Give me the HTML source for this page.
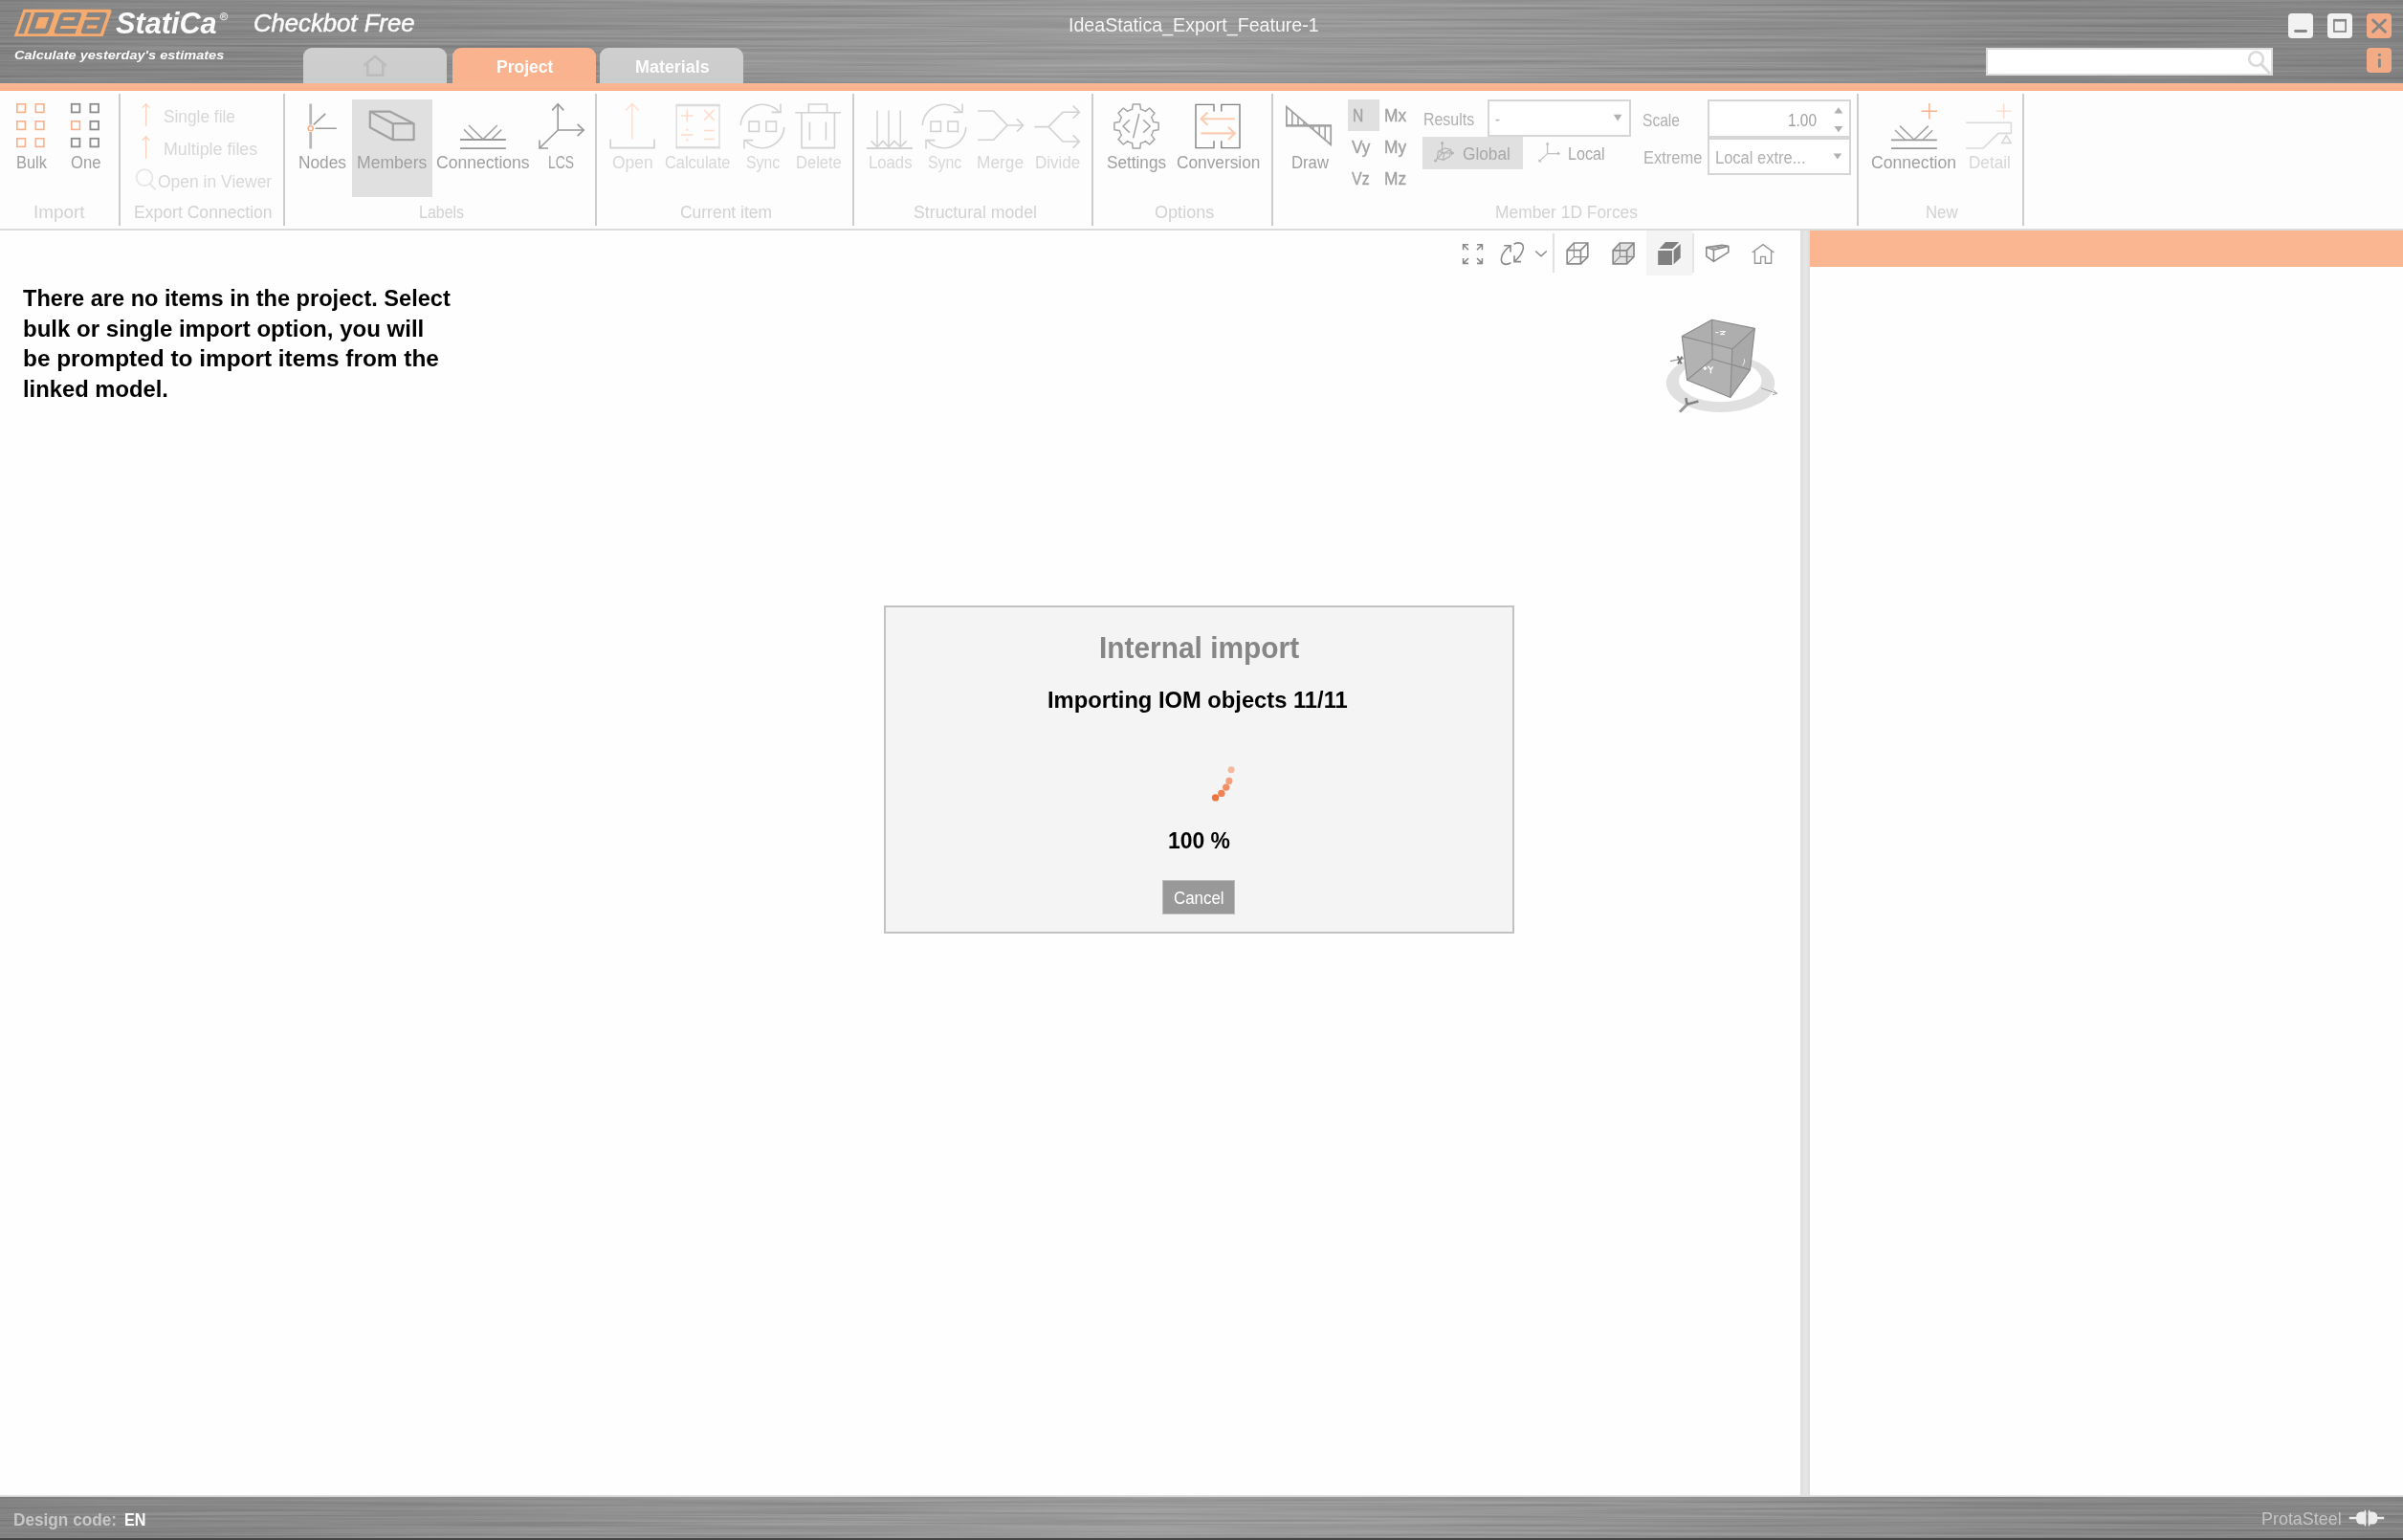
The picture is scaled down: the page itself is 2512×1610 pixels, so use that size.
<!DOCTYPE html>
<html lang="en">
<head>
<meta charset="utf-8">
<title>IDEA StatiCa Checkbot - IdeaStatica_Export_Feature-1</title>
<style>
*{box-sizing:border-box;margin:0;padding:0}
html,body{width:2512px;height:1610px;overflow:hidden;background:#fefefe;font-family:"Liberation Sans",sans-serif}
#app{position:relative;width:2512px;height:1610px;overflow:hidden;background:#fefefe}
.abs{position:absolute}
.t{position:absolute;white-space:pre;line-height:1;transform-origin:0 0;display:block}
.metal{background-color:#8f8f8f;background-image:linear-gradient(90deg,#838383 0,#8a8a8a 14%,#979797 34%,#9c9c9c 48%,#999 60%,#8c8c8c 82%,#838383 100%)}
.brush{position:absolute;left:0;width:2512px;pointer-events:none}
#header{left:0;top:0;width:2512px;height:87px}
#hdrshade{left:0;top:83px;width:2512px;height:4px;background:linear-gradient(180deg,rgba(120,135,140,0),rgba(120,135,140,.55))}
#obar{left:0;top:87px;width:2512px;height:8px;background:linear-gradient(180deg,#f8b795,#fbb08a)}
.tab{position:absolute;top:50px;height:37px;width:150px;border-radius:9px 9px 0 0;background:linear-gradient(180deg,#cfcfcf 0,#cccccc 80%,#c8cece 100%)}
.tab.on{background:#f9b48f}
.wbtn{position:absolute;width:26px;height:26px;border-radius:4px;background:#f2f2f2}
.wbtn.or{background:#f3ab85}
#search{left:2076px;top:50px;width:300px;height:29px;background:#fff;border:2px solid #dcdcdc}
#ribbon{left:0;top:95px;width:2512px;height:144px;background:#fdfdfd}
#rline{left:0;top:239px;width:2512px;height:2px;background:#dcdcdc}
.sep{position:absolute;top:98px;width:2px;height:138px;background:#cdcdcd}
.hl{position:absolute;background:#e0e0e0}
.box{position:absolute;background:#fff;border:2px solid #d6d6d6}
#view{left:0;top:241px;width:1882px;height:1322px;background:#fefefe}
#split{left:1882px;top:241px;width:10px;height:1322px;background:linear-gradient(90deg,#dedede,#e6e6e6 60%,#dcdcdc)}
#side{left:1892px;top:241px;width:620px;height:1322px;background:#fefefe}
#sidehdr{left:1892px;top:241px;width:620px;height:38px;background:#f9b690}
#sline{left:0;top:1563px;width:2512px;height:2px;background:linear-gradient(180deg,#e6e6e6,#d0d0d0)}
#status{left:0;top:1565px;width:2512px;height:43px}
#sdark{left:0;top:1608px;width:2512px;height:2px;background:#454545}
#dlg{left:924px;top:633px;width:659px;height:343px;background:#f4f4f4;border:2px solid #c2c2c2}
#cancel{left:1215px;top:920px;width:76px;height:36px;background:#999;border:1px solid #bdbdbd}
svg{position:absolute;left:0;top:0;overflow:visible}
</style>
</head>
<body>
<div id="app">
  <!-- ===== title / header ===== -->
  <div id="header" class="abs metal"></div>
  <svg class="brush" style="top:0" width="2512" height="87"><defs><filter id="brushf" x="0" y="0" width="100%" height="100%" color-interpolation-filters="sRGB"><feTurbulence type="fractalNoise" baseFrequency="0.003 0.38" numOctaves="2" seed="7" result="n"/><feColorMatrix in="n" type="matrix" values="0 0 0 0 1  0 0 0 0 1  0 0 0 0 1  0.30 0 0 0 -0.118"/></filter><filter id="brushd" x="0" y="0" width="100%" height="100%" color-interpolation-filters="sRGB"><feTurbulence type="fractalNoise" baseFrequency="0.003 0.38" numOctaves="2" seed="21" result="n"/><feColorMatrix in="n" type="matrix" values="0 0 0 0 0  0 0 0 0 0  0 0 0 0 0  0.30 0 0 0 -0.118"/></filter></defs><rect width="2512" height="87" filter="url(#brushf)"/><rect width="2512" height="87" filter="url(#brushd)"/></svg>
  <div id="hdrshade" class="abs"></div>
  <div class="tab" style="left:317px"></div>
  <div class="tab on" style="left:473px"></div>
  <div class="tab" style="left:627px"></div>
  <div id="obar" class="abs"></div>
  <div class="wbtn" style="left:2392px;top:14px"></div>
  <div class="wbtn" style="left:2433px;top:14px"></div>
  <div class="wbtn or" style="left:2474px;top:14px"></div>
  <div class="wbtn or" style="left:2474px;top:50px"></div>
  <div id="search" class="abs"></div>

  <!-- ===== ribbon ===== -->
  <div id="ribbon" class="abs"></div>
  <div id="rline" class="abs"></div>
  <div class="sep" style="left:124px"></div>
  <div class="sep" style="left:296px"></div>
  <div class="sep" style="left:622px"></div>
  <div class="sep" style="left:891px"></div>
  <div class="sep" style="left:1141px"></div>
  <div class="sep" style="left:1329px"></div>
  <div class="sep" style="left:1941px"></div>
  <div class="sep" style="left:2114px"></div>
  <div class="hl" style="left:368px;top:104px;width:84px;height:102px"></div>
  <div class="hl" style="left:1409px;top:104px;width:33px;height:33px"></div>
  <div class="hl" style="left:1487px;top:143px;width:105px;height:34px"></div>
  <div class="box" style="left:1555px;top:104px;width:150px;height:39px"></div>
  <div class="box" style="left:1785px;top:104px;width:150px;height:41px;border-bottom-width:3px"></div>
  <div class="box" style="left:1785px;top:143px;width:150px;height:40px;border-top-width:3px"></div>

  <!-- ===== main areas ===== -->
  <div id="view" class="abs"></div>
  <div id="split" class="abs"></div>
  <div id="side" class="abs"></div>
  <div id="sidehdr" class="abs"></div>
  <div class="abs" style="left:1721px;top:241px;width:48px;height:47px;background:#f4f4f4"></div>
  <div class="abs" style="left:1623px;top:244px;width:2px;height:41px;background:#e2e2e2"></div>
  <div class="abs" style="left:1769px;top:244px;width:2px;height:41px;background:#e6e6e6"></div>

  <!-- ===== status bar ===== -->
  <div id="sline" class="abs"></div>
  <div id="status" class="abs metal"></div>
  <svg class="brush" style="top:1565px" width="2512" height="43"><rect width="2512" height="43" filter="url(#brushf)"/><rect width="2512" height="43" filter="url(#brushd)"/></svg>
  <div id="sdark" class="abs"></div>

  <!-- ===== dialog ===== -->
  <div id="dlg" class="abs"></div>
  <div id="cancel" class="abs"></div>

  <!-- ===== icons ===== -->
  <svg width="2512" height="1610" viewBox="0 0 2512 1610" fill="none" stroke-linecap="butt" stroke-linejoin="miter">
<!-- IDEA logo -->
<g transform="translate(0,38) skewX(-19.16) translate(0,-38)">
  <path d="M14.7 9.8 H104.3 Q107.6 9.8 107.6 13 V38 H14.7 Z" fill="#f5ab6e" stroke="none"/>
  <rect x="18" y="13" width="6" height="22.2" fill="#858585"/>
  <path d="M27.7 13 H45.5 Q49 13 49 16.5 V31.7 Q49 35.2 45.5 35.2 H27.7 Z" fill="#858585"/>
  <rect x="33.6" y="18.1" width="10.7" height="11.6" fill="#f5ab6e"/>
  <path d="M58.4 13 H73.9 Q77.4 13 77.4 16.5 V35.2 H58.4 Q54.9 35.2 54.9 31.7 V16.5 Q54.9 13 58.4 13 Z" fill="#858585"/>
  <rect x="59.8" y="18.1" width="11.7" height="3.1" fill="#f5ab6e"/>
  <rect x="59.9" y="27" width="17.7" height="3" fill="#f5ab6e"/>
  <path d="M82.9 13 H100.4 Q103.9 13 103.9 16.5 V35.2 H86.4 Q82.9 35.2 82.9 31.7 Z" fill="#858585"/>
  <rect x="81.4" y="18.1" width="16.5" height="2.6" fill="#f5ab6e"/>
  <rect x="87.5" y="26.5" width="10.5" height="3.2" fill="#f5ab6e"/>
</g>
<!-- registered mark -->
<circle cx="234" cy="17.2" r="3.7" stroke="#f4f4f4" stroke-width="0.9"/>
<path d="M232.7 19.3 V15.1 H234.4 Q235.5 15.1 235.5 16.2 Q235.5 17.2 234.4 17.2 H232.7 M234.3 17.2 L235.6 19.3" stroke="#f4f4f4" stroke-width="0.8"/>
<!-- home tab icon -->
<path d="M380.4 68.6 L392.1 59 L403.8 68.6" stroke="#bcbcbc" stroke-width="2.6"/>
<path d="M384.3 66.5 V78.6 H400.3 V66.5" stroke="#bcbcbc" stroke-width="2.6"/>
<!-- window buttons -->
<rect x="2398.1" y="31.1" width="13.8" height="2.8" rx="1.4" fill="#868686"/>
<rect x="2439.9" y="21.3" width="12.2" height="11.7" stroke="#868686" stroke-width="1.7"/>
<rect x="2439.1" y="19.9" width="13.9" height="2.6" fill="#868686"/>
<path d="M2480.6 21 L2493.4 33.2 M2493.4 21 L2480.6 33.2" stroke="#858585" stroke-width="2.9" stroke-linecap="round"/>
<circle cx="2487.4" cy="57.3" r="1.6" fill="#858585"/>
<path d="M2487.4 62.6 V69.4" stroke="#858585" stroke-width="2.9" stroke-linecap="round"/>
<!-- search magnifier -->
<circle cx="2358.5" cy="61.5" r="7.3" stroke="#dadada" stroke-width="2.6"/>
<path d="M2363.7 67 L2373 77" stroke="#dadada" stroke-width="3"/>
<!-- ===== ribbon: Import ===== -->
<g stroke="#f8b18b" stroke-width="1.6">
  <rect x="17.8" y="108.8" width="8.6" height="8.6"/><rect x="37.3" y="108.8" width="8.6" height="8.6"/>
  <rect x="17.8" y="126.8" width="8.6" height="8.6"/><rect x="37.3" y="126.8" width="8.6" height="8.6"/>
  <rect x="17.8" y="144.8" width="8.6" height="8.6"/><rect x="37.3" y="144.8" width="8.6" height="8.6"/>
  <rect x="74.8" y="126.8" width="8.6" height="8.6"/>
</g>
<g stroke="#8c8c8c" stroke-width="1.8">
  <rect x="74.8" y="108.8" width="8.6" height="8.6"/><rect x="94.4" y="108.8" width="8.6" height="8.6"/>
  <rect x="94.4" y="126.8" width="8.6" height="8.6"/>
  <rect x="74.8" y="144.8" width="8.6" height="8.6"/><rect x="94.4" y="144.8" width="8.6" height="8.6"/>
</g>
<!-- Export connection -->
<g stroke="#fcd3bf" stroke-width="1.3">
  <path d="M152.6 132 V108.6 M149 112.6 L152.6 108.6 L156.2 112.6"/>
  <path d="M152.6 166 V142.8 M149 146.8 L152.6 142.8 L156.2 146.8"/>
</g>
<circle cx="151" cy="185.6" r="8.4" stroke="#e6e6e6" stroke-width="1.8"/>
<path d="M156.6 192 L162.6 198.4" stroke="#e6e6e6" stroke-width="2"/>
<!-- Nodes -->
<path d="M324.7 108.4 V130.4 M324.7 138 V155.6" stroke="#b9b9b9" stroke-width="2.8"/>
<path d="M329.6 134.2 H351.8 M327.8 130.4 L340.2 118.8" stroke="#9a9a9a" stroke-width="1.6"/>
<circle cx="324.7" cy="134.2" r="2.5" stroke="#f8b18b" stroke-width="1.6"/>
<!-- Members -->
<path d="M386.8 116.6 H407.4 L432.6 129.2 V146.2 H410.8 L386.8 133.2 Z M386.8 116.6 L410.8 129.2 H432.6 M410.8 129.2 V146.2" stroke="#a1a1a1" stroke-width="2.2" stroke-linejoin="round"/>
<!-- Connections -->
<path d="M481 146 H528.8 M481 155.2 H528.8" stroke="#999" stroke-width="1.8"/>
<path d="M490 131 L505 145.6 M485 135.4 L495.4 145.6 M519.8 131 L505 145.6 M524.2 135.6 L514 145.6" stroke="#a3a3a3" stroke-width="1.5"/>
<!-- LCS -->
<path d="M583.2 109 V136 H610 M583.2 136 L564.2 154.8" stroke="#999" stroke-width="1.6"/>
<path d="M577.2 115.4 L583.2 108.8 L589.2 115.4 M603.6 129.8 L610.2 136 L603.6 142.2 M564 146.4 V155 H573" stroke="#999" stroke-width="1.6"/>
<!-- ===== Current item ===== -->
<path d="M638.2 145.6 V154.6 H684 V145.6" stroke="#d2d2d2" stroke-width="1.7"/>
<path d="M660.8 145.6 V108.4 M654 115.6 L660.8 108.4 L667.6 115.6" stroke="#fde1d4" stroke-width="1.5"/>
<path d="M706.6 110 H752.6 M706.6 154.2 H752.6" stroke="#dcdcdc" stroke-width="2.6"/>
<path d="M707.2 109 V155.2 M752 109 V155.2" stroke="#dcdcdc" stroke-width="1.4"/>
<g stroke="#fddccc" stroke-width="1.5">
  <path d="M712 121 H724.6 M718.3 114.6 V127.4 M736 114.8 L746.6 125.6 M746.6 114.8 L736 125.6"/>
  <path d="M712 141 H724.6 M735.8 136.6 H746.8 M735.8 145.6 H746.8"/>
</g>
<circle cx="718.3" cy="135.8" r="1.2" fill="#fddccc"/><circle cx="718.3" cy="146.4" r="1.2" fill="#fddccc"/>
<!-- Sync 1 -->
<g id="sync1" stroke="#d2d2d2" stroke-width="1.6">
  <path d="M774.2 131 A23 23 0 0 1 814.4 117"/>
  <path d="M819.8 133 A23 23 0 0 1 779.6 147"/>
  <path d="M816 108.6 V117.4 H806.6 M778 155.4 V146.6 H787.4"/>
  <rect x="783" y="127" width="10.4" height="10.4"/><rect x="801" y="127" width="10.4" height="10.4"/>
</g>
<!-- Delete -->
<g stroke="#d2d2d2" stroke-width="1.6">
  <path d="M831.2 117.8 H879 M838 117.8 V154.6 H872.4 V117.8 M845.4 117.8 V109 H864.6 V117.8"/>
  <path d="M846.4 127.4 V146.6 M863.4 127.4 V146.6"/>
</g>
<!-- ===== Structural model ===== -->
<g stroke="#d2d2d2" stroke-width="1.5">
  <path d="M906 155 H954" stroke-width="1.8"/>
  <path d="M917 115.6 V154 M929 115.6 V154 M941.2 115.6 V154"/>
  <path d="M910.6 147.4 L917 153.6 L923 147.4 L929 153.6 L935 147.4 L941.2 153.6 L947.6 147.4"/>
</g>
<use href="#sync1" x="190" y="0"/>
<g stroke="#d2d2d2" stroke-width="1.6">
  <path d="M1022.2 116 H1038.6 L1053 131 L1038.6 146.2 H1022.2 M1053 131 H1069.6 M1063 124.4 L1069.6 131 L1063 137.6"/>
  <path d="M1081.4 132.6 H1096 M1128.4 117.2 H1111 L1096 132.6 L1111 148 H1128.4 M1121.8 110.6 L1128.4 117.2 L1121.8 123.8 M1121.8 141.4 L1128.4 148 L1121.8 154.6"/>
</g>
<!-- ===== Options ===== -->
<path d="M1183.6 114.3 L1184.2 108.9 L1191.8 108.9 L1192.4 114.3 A18.2 18.2 0 0 1 1197.4 116.4 L1201.6 113.0 L1207.0 118.4 L1203.6 122.6 A18.2 18.2 0 0 1 1205.7 127.6 L1211.1 128.2 L1211.1 135.8 L1205.7 136.4 A18.2 18.2 0 0 1 1203.6 141.4 L1207.0 145.6 L1201.6 151.0 L1197.4 147.6 A18.2 18.2 0 0 1 1192.4 149.7 L1191.8 155.1 L1184.2 155.1 L1183.6 149.7 A18.2 18.2 0 0 1 1178.6 147.6 L1174.4 151.0 L1169.0 145.6 L1172.4 141.4 A18.2 18.2 0 0 1 1170.3 136.4 L1164.9 135.8 L1164.9 128.2 L1170.3 127.6 A18.2 18.2 0 0 1 1172.4 122.6 L1169.0 118.4 L1174.4 113.0 L1178.6 116.4 A18.2 18.2 0 0 1 1183.6 114.3 Z" stroke="#a4a4a4" stroke-width="1.5" stroke-linejoin="round"/>
<path d="M1180.8 125.2 L1174 132 L1180.8 138.6 M1195.2 125.2 L1202.2 132 L1195.2 138.6 M1190.8 119 L1184.6 144.4" stroke="#a4a4a4" stroke-width="1.5"/>
<path d="M1269 116.6 V109.4 H1250 V154.6 H1269 V147.2 M1276.8 116.6 V109.4 H1296 V154.6 H1276.8 V147.2" stroke="#808080" stroke-width="1.4"/>
<path d="M1290.8 124.2 H1256 M1262.4 117.6 L1255.6 124.2 L1262.4 130.8 M1255.4 139.4 H1290.4 M1284 132.8 L1290.8 139.4 L1284 146" stroke="#fbcbb2" stroke-width="2.1"/>
<!-- ===== Member 1D Forces ===== -->
<g stroke="#a0a0a0" stroke-width="1.8">
  <path d="M1344.9 111.6 V131.4 H1391.2 V151.2 Z" stroke-linejoin="miter"/>
  <path d="M1344.2 131.4 H1392" stroke-width="2.2"/>
  <path d="M1350.8 117 V131.4 M1357 122.4 V131.4 M1363 127.6 V131.4 M1372.8 131.4 V135.4 M1379.2 131.4 V141 M1385.2 131.4 V146.2" stroke-width="1.6"/>
</g>
<path d="M1686.8 119.8 H1695.4 L1691.1 126.6 Z" fill="#b0b0b0"/>
<path d="M1916.6 160.4 H1925.2 L1920.9 166.4 Z" fill="#b0b0b0"/>
<path d="M1917.4 118.4 H1926.4 L1921.9 112.2 Z" fill="#b0b0b0"/>
<path d="M1917.4 132 H1926.4 L1921.9 138.2 Z" fill="#b0b0b0"/>
<!-- global icon -->
<g stroke="#b4b4b4" stroke-width="1.2">
  <path d="M1507.6 149.2 V160 M1507.6 160 L1500 168.6 M1507.6 160 H1519.6"/>
  <path d="M1503.4 158.2 L1510.4 154.8 L1516.6 156.4 L1515.6 163.6 L1508.6 167.4 L1502.4 165.4 Z M1503.4 158.2 L1509.6 160.2 L1508.6 167.4 M1509.6 160.2 L1516.6 156.4"/>
</g>
<circle cx="1507.6" cy="149.6" r="1.5" fill="#b4b4b4"/><circle cx="1500.6" cy="168" r="1.5" fill="#b4b4b4"/><path d="M1517 157.6 L1520.6 160 L1517 162.4 Z" fill="#b4b4b4"/>
<!-- local icon -->
<g stroke="#c2c2c2" stroke-width="1.3">
  <path d="M1617.6 149.6 V160.6 H1629.6 M1617.6 160.6 L1609.4 168.4"/>
</g>
<path d="M1615.6 151.6 L1617.6 148.2 L1619.6 151.6 Z M1628 158.6 L1631.4 160.6 L1628 162.6 Z M1608.4 166 L1608.4 169.6 L1612 169.4 Z" fill="#c2c2c2"/>
<!-- ===== New ===== -->
<path d="M1977 146.4 H2024.8 M1977 155.2 H2024.8" stroke="#999" stroke-width="1.8"/>
<path d="M1986 131.6 L2001 146 M1981 136 L1991.4 146 M2015.8 131.6 L2001 146 M2020.2 136.2 L2010 146" stroke="#a3a3a3" stroke-width="1.5"/>
<path d="M2008.6 116.2 H2025 M2016.8 108 V124.4" stroke="#f8b18b" stroke-width="1.4"/>
<path d="M2055.2 128.2 H2102.4 V139.4 H2089 L2073 155 H2055.2" stroke="#dadada" stroke-width="1.6"/>
<path d="M2097.4 141.6 L2102 149.4 H2092.8 Z" stroke="#d6d6d6" stroke-width="1.5"/>
<path d="M2087 116.2 H2102.6 M2094.8 108.4 V124" stroke="#fcd9c8" stroke-width="1.3"/>
<!-- ===== viewport toolbar ===== -->
<g stroke="#8a8a8a" stroke-width="1.6">
  <path d="M1535 255.8 H1529.6 V261.2 M1529.6 255.8 L1535 261.2 M1544 255.8 H1549.4 V261.2 M1549.4 255.8 L1544 261.2 M1535 275.4 H1529.6 V270 M1529.6 275.4 L1535 270 M1544 275.4 H1549.4 V270 M1549.4 275.4 L1544 270"/>
  <path d="M1579.4 274.8 C1572.4 278.6 1568.4 274.6 1569.6 269.4 C1570.6 264.6 1574.4 260.2 1578.8 257.2 M1572.2 256.8 H1579 V263.4"/>
  <path d="M1582.6 255.2 C1588.6 252.2 1593.4 254.6 1592.2 260.4 C1591.2 265.2 1587.4 269.8 1583 273.4 M1583 267.2 V273.6 H1590"/>
  <path d="M1605.2 262.4 L1611 267.8 L1616.8 262.4" stroke-width="1.4"/>
</g>
<g stroke="#8a8a8a" stroke-width="1.7">
  <path d="M1638.2 261.6 H1652.4 V275.8 H1638.2 Z M1638.2 261.6 L1645.4 254 H1659.8 V268.6 L1652.4 275.8 M1652.4 261.6 L1659.8 254"/>
  <path d="M1645.4 254 V268.6 H1659.8 M1645.4 268.6 L1638.2 275.8 M1645.4 263.6 V268.6 H1650" stroke-width="1.1"/>
</g>
<path d="M1686.2 261.8 L1693.4 254 H1708 V268.4 L1700.6 275.8 H1686.2 Z" fill="#e2e2e2"/>
<g stroke="#8a8a8a" stroke-width="1.7">
  <path d="M1686.2 261.8 H1700.6 V275.8 H1686.2 Z M1686.2 261.8 L1693.4 254 H1708 V268.4 L1700.6 275.8 M1700.6 261.8 L1708 254"/>
  <path d="M1693.4 254 V268.4 H1708 M1693.4 268.4 L1686.2 275.8" stroke-width="1.1"/>
</g>
<path d="M1733.2 262 H1748 V277 H1733.2 Z M1734.6 260 L1741 253.1 H1755.1 L1748.4 260 Z M1749.6 261.6 L1756.7 254.9 V269.5 L1749.6 276.2 Z" fill="#808080"/>
<g stroke="#8a8a8a" stroke-width="1.6" stroke-linejoin="round">
  <path d="M1783.8 258.6 L1800.2 256.4 L1806.8 257.4 V263.6 L1791.4 273.4 L1783.8 267.8 Z M1783.8 258.6 L1791.4 261.2 L1806.8 257.4 M1791.4 261.2 V273.4"/>
  <path d="M1789.6 259.6 L1800.4 257.8" stroke-width="1"/>
</g>
<path d="M1831.6 264 L1843 255.6 L1854.4 264 M1834.4 262.6 V275.2 H1840.6 V268.4 H1845.4 V275.2 H1851.6 V262.6" stroke="#979797" stroke-width="1.4"/>
<!-- ===== navigation cube ===== -->
<path d="M1741.8 400.6 A56.7 30.4 0 1 0 1855.2 400.6 A56.7 30.4 0 1 0 1741.8 400.6 Z M1755 398 A43.3 22.2 0 1 1 1841.6 398 A43.3 22.2 0 1 1 1755 398 Z" fill="#e0e0e0" fill-rule="evenodd"/>
<path d="M1789.6 334.2 L1834.4 343.4 L1829.5 386.6 L1808.9 415.5 L1763.6 397.2 L1758.3 351.6 Z" fill="#aeaeae"/>
<path d="M1758.3 351.6 L1810.8 364.8 L1808.9 415.5 L1763.6 397.2 Z" fill="#b2b2b2"/>
<path d="M1810.8 364.8 L1834.4 343.4 L1829.5 386.6 L1808.9 415.5 Z" fill="#a9a9a9"/>
<g stroke="#8a8a8a" stroke-width="1.1" stroke-linejoin="round">
  <path d="M1789.6 334.2 L1834.4 343.4 L1829.5 386.6 L1808.9 415.5 L1763.6 397.2 L1758.3 351.6 Z"/>
  <path d="M1758.3 351.6 L1810.8 364.8 L1834.4 343.4 M1810.8 364.8 L1808.9 415.5"/>
  <path d="M1789.6 334.2 L1790.1 375.5 L1763.6 397.2 M1790.1 375.5 L1829.5 386.6"/>
</g>
<path d="M1793.4 347.6 H1796.4 M1797.8 346.6 H1803.6 L1798.4 349.6 H1803" stroke="#fff" stroke-width="1"/>
<path d="M1780.4 385 H1784.4 M1782.4 383 V387 M1785.6 382.6 L1788.4 386.4 L1790.6 383.4 M1788.4 386.4 V390.4" stroke="#fff" stroke-width="1.3"/>
<path d="M1823.4 375.4 Q1825 378.6 1821.4 382.4" stroke="#f2f2f2" stroke-width="1"/>
<path d="M1746 377.6 L1760.4 374.6" stroke="#9a9a9a" stroke-width="1.2"/>
<path d="M1753.6 372.4 L1757.6 380.4 M1758.4 372.8 L1754 380.4" stroke="#777" stroke-width="2"/>
<path d="M1756 430.6 L1763.6 422.8 L1762.4 416 M1763.6 422.8 L1775.4 419.6" stroke="#828282" stroke-width="2.6"/>
<path d="M1756.4 430.4 L1763.4 423" stroke="#9c9c9c" stroke-width="2.8"/>
<path d="M1841.2 405.8 L1857.6 411.4 M1853.4 407.4 L1857.8 411.4 L1853 412.6" stroke="#9a9a9a" stroke-width="0.9"/>
<!-- ===== spinner ===== -->
<circle cx="1287.1" cy="804.7" r="3.5" fill="#f4b7a0"/>
<circle cx="1284.9" cy="816.4" r="3.6" fill="#f3a07d"/>
<circle cx="1281.7" cy="823.2" r="3.6" fill="#f28e64"/>
<circle cx="1276.9" cy="829.4" r="3.7" fill="#f18251"/>
<circle cx="1270.6" cy="833.9" r="3.7" fill="#f0733c"/>
<!-- ===== status plug ===== -->
<path d="M2455.8 1587 H2466 M2482 1587 H2492.2" stroke="#ececec" stroke-width="2.4"/>
<path d="M2473.4 1580.4 H2468.4 Q2463 1580.4 2463 1587 Q2463 1593.6 2468.4 1593.6 H2473.4 Z M2475.6 1580.4 H2480 Q2485.4 1580.4 2485.4 1587 Q2485.4 1593.6 2480 1593.6 H2475.6 Z" fill="#ececec"/>
<path d="M2472.4 1578.8 V1595.4 M2476.6 1578.8 V1595.4" stroke="#ececec" stroke-width="1.4"/>

  </svg>

  <!-- ===== texts ===== -->
<div id="texts" style="position:absolute;left:0;top:0;width:2512px;height:1610px;will-change:transform">
<span class="t" style="left:120.70px;top:7px;line-height:35px;font-size:31.00px;color:#fbfbfb;transform:scaleX(0.9888);font-weight:700;font-style:italic;">StatiCa</span>
<span class="t" style="left:265.40px;top:10px;line-height:28px;font-size:25.00px;color:#fbfbfb;transform:scaleX(1.0274);font-style:italic;-webkit-text-stroke:0.5px #fbfbfb;">Checkbot Free</span>
<span class="t" style="left:14.60px;top:50px;line-height:15px;font-size:13.40px;color:#fbfbfb;transform:scaleX(1.0858);font-weight:700;font-style:italic;">Calculate yesterday&#x27;s estimates</span>
<span class="t" style="left:1117.30px;top:14px;line-height:23px;font-size:20.50px;color:#f6f6f6;transform:scaleX(0.9568);">IdeaStatica_Export_Feature-1</span>
<span class="t" style="left:518.70px;top:59px;line-height:21px;font-size:19.20px;color:#fdfdfd;transform:scaleX(0.9126);font-weight:700;">Project</span>
<span class="t" style="left:663.70px;top:59px;line-height:21px;font-size:19.20px;color:#fdfdfd;transform:scaleX(0.9347);font-weight:700;">Materials</span>
<span class="t" style="left:17.00px;top:160px;line-height:20px;font-size:18.00px;color:#a0a0a0;transform:scaleX(0.9129);">Bulk</span>
<span class="t" style="left:74.00px;top:160px;line-height:20px;font-size:18.00px;color:#a0a0a0;transform:scaleX(0.9259);">One</span>
<span class="t" style="left:170.80px;top:112px;line-height:20px;font-size:18.00px;color:#d7d7d7;transform:scaleX(0.9599);">Single file</span>
<span class="t" style="left:170.80px;top:146px;line-height:20px;font-size:18.00px;color:#d7d7d7;transform:scaleX(0.9915);">Multiple files</span>
<span class="t" style="left:164.80px;top:180px;line-height:20px;font-size:18.00px;color:#d7d7d7;transform:scaleX(0.9710);">Open in Viewer</span>
<span class="t" style="left:312.00px;top:160px;line-height:20px;font-size:18.00px;color:#a0a0a0;transform:scaleX(0.9612);">Nodes</span>
<span class="t" style="left:373.00px;top:160px;line-height:20px;font-size:18.00px;color:#a0a0a0;transform:scaleX(0.9771);">Members</span>
<span class="t" style="left:456.00px;top:160px;line-height:20px;font-size:18.00px;color:#a0a0a0;transform:scaleX(0.9752);">Connections</span>
<span class="t" style="left:573.00px;top:160px;line-height:20px;font-size:18.00px;color:#a0a0a0;transform:scaleX(0.7712);">LCS</span>
<span class="t" style="left:639.80px;top:160px;line-height:20px;font-size:18.00px;color:#d7d7d7;transform:scaleX(0.9670);">Open</span>
<span class="t" style="left:695.00px;top:160px;line-height:20px;font-size:18.00px;color:#d7d7d7;transform:scaleX(0.9113);">Calculate</span>
<span class="t" style="left:780.00px;top:160px;line-height:20px;font-size:18.00px;color:#d7d7d7;transform:scaleX(0.8749);">Sync</span>
<span class="t" style="left:831.50px;top:160px;line-height:20px;font-size:18.00px;color:#d7d7d7;transform:scaleX(0.9189);">Delete</span>
<span class="t" style="left:907.70px;top:160px;line-height:20px;font-size:18.00px;color:#d7d7d7;transform:scaleX(0.9276);">Loads</span>
<span class="t" style="left:969.80px;top:160px;line-height:20px;font-size:18.00px;color:#d7d7d7;transform:scaleX(0.8799);">Sync</span>
<span class="t" style="left:1021.00px;top:160px;line-height:20px;font-size:18.00px;color:#d7d7d7;transform:scaleX(0.9602);">Merge</span>
<span class="t" style="left:1081.70px;top:160px;line-height:20px;font-size:18.00px;color:#d7d7d7;transform:scaleX(0.9452);">Divide</span>
<span class="t" style="left:1157.00px;top:160px;line-height:20px;font-size:18.00px;color:#a0a0a0;transform:scaleX(0.9535);">Settings</span>
<span class="t" style="left:1230.00px;top:160px;line-height:20px;font-size:18.00px;color:#a0a0a0;transform:scaleX(0.9601);">Conversion</span>
<span class="t" style="left:1349.50px;top:160px;line-height:20px;font-size:18.00px;color:#a0a0a0;transform:scaleX(0.9269);">Draw</span>
<span class="t" style="left:1956.40px;top:160px;line-height:20px;font-size:18.00px;color:#a0a0a0;transform:scaleX(0.9772);">Connection</span>
<span class="t" style="left:2057.90px;top:160px;line-height:20px;font-size:18.00px;color:#d7d7d7;transform:scaleX(0.9514);">Detail</span>
<span class="t" style="left:35.00px;top:212px;line-height:20px;font-size:18.00px;color:#d2d2d2;transform:scaleX(1.0504);">Import</span>
<span class="t" style="left:140.00px;top:212px;line-height:20px;font-size:18.00px;color:#d2d2d2;transform:scaleX(0.9764);">Export Connection</span>
<span class="t" style="left:437.90px;top:212px;line-height:20px;font-size:18.00px;color:#d2d2d2;transform:scaleX(0.8878);">Labels</span>
<span class="t" style="left:711.00px;top:212px;line-height:20px;font-size:18.00px;color:#d2d2d2;transform:scaleX(0.9693);">Current item</span>
<span class="t" style="left:954.70px;top:212px;line-height:20px;font-size:18.00px;color:#d2d2d2;transform:scaleX(0.9844);">Structural model</span>
<span class="t" style="left:1207.00px;top:212px;line-height:20px;font-size:18.00px;color:#d2d2d2;transform:scaleX(1.0039);">Options</span>
<span class="t" style="left:1563.00px;top:212px;line-height:20px;font-size:18.00px;color:#d2d2d2;transform:scaleX(0.9673);">Member 1D Forces</span>
<span class="t" style="left:2013.00px;top:212px;line-height:20px;font-size:18.00px;color:#d2d2d2;transform:scaleX(0.9322);">New</span>
<span class="t" style="left:1414.00px;top:111px;line-height:20px;font-size:18.00px;color:#a2a2a2;transform:scaleX(0.8689);-webkit-text-stroke:0.4px #a2a2a2;">N</span>
<span class="t" style="left:1446.90px;top:111px;line-height:20px;font-size:18.00px;color:#a2a2a2;transform:scaleX(0.9631);-webkit-text-stroke:0.4px #a2a2a2;">Mx</span>
<span class="t" style="left:1413.30px;top:144px;line-height:20px;font-size:18.00px;color:#a2a2a2;transform:scaleX(0.9489);-webkit-text-stroke:0.4px #a2a2a2;">Vy</span>
<span class="t" style="left:1446.90px;top:144px;line-height:20px;font-size:18.00px;color:#a2a2a2;transform:scaleX(0.9631);-webkit-text-stroke:0.4px #a2a2a2;">My</span>
<span class="t" style="left:1413.30px;top:177px;line-height:20px;font-size:18.00px;color:#a2a2a2;transform:scaleX(0.8898);-webkit-text-stroke:0.4px #a2a2a2;">Vz</span>
<span class="t" style="left:1446.90px;top:177px;line-height:20px;font-size:18.00px;color:#a2a2a2;transform:scaleX(0.9631);-webkit-text-stroke:0.4px #a2a2a2;">Mz</span>
<span class="t" style="left:1487.90px;top:115px;line-height:20px;font-size:18.00px;color:#b0b0b0;transform:scaleX(0.8846);">Results</span>
<span class="t" style="left:1563.00px;top:115px;line-height:20px;font-size:18.00px;color:#b0b0b0;transform:scaleX(0.8354);">-</span>
<span class="t" style="left:1528.50px;top:151px;line-height:20px;font-size:18.00px;color:#a8a8a8;transform:scaleX(0.9592);">Global</span>
<span class="t" style="left:1639.00px;top:151px;line-height:20px;font-size:18.00px;color:#a8a8a8;transform:scaleX(0.8973);">Local</span>
<span class="t" style="left:1717.40px;top:116px;line-height:20px;font-size:18.00px;color:#b0b0b0;transform:scaleX(0.8658);">Scale</span>
<span class="t" style="left:1869.00px;top:116px;line-height:20px;font-size:18.00px;color:#a0a0a0;transform:scaleX(0.8558);">1.00</span>
<span class="t" style="left:1717.90px;top:155px;line-height:20px;font-size:18.00px;color:#b0b0b0;transform:scaleX(0.9163);">Extreme</span>
<span class="t" style="left:1792.50px;top:155px;line-height:20px;font-size:18.00px;color:#b0b0b0;transform:scaleX(0.9170);">Local extre...</span>
<span class="t" style="left:23.90px;top:299px;line-height:26px;font-size:23.50px;color:#000;transform:scaleX(1.0033);font-weight:700;">There are no items in the project. Select</span>
<span class="t" style="left:23.90px;top:331px;line-height:26px;font-size:23.50px;color:#000;transform:scaleX(1.0228);font-weight:700;">bulk or single import option, you will</span>
<span class="t" style="left:23.90px;top:362px;line-height:26px;font-size:23.50px;color:#000;transform:scaleX(1.0376);font-weight:700;">be prompted to import items from the</span>
<span class="t" style="left:23.90px;top:394px;line-height:26px;font-size:23.50px;color:#000;transform:scaleX(1.0116);font-weight:700;">linked model.</span>
<span class="t" style="left:1149.20px;top:660px;line-height:34px;font-size:30.60px;color:#868686;transform:scaleX(0.9762);font-weight:700;">Internal import</span>
<span class="t" style="left:1095.00px;top:719px;line-height:26px;font-size:23.60px;color:#000;transform:scaleX(1.0054);font-weight:700;">Importing IOM objects 11/11</span>
<span class="t" style="left:1220.50px;top:866px;line-height:26px;font-size:23.60px;color:#000;transform:scaleX(0.9715);font-weight:700;">100 %</span>
<span class="t" style="left:1226.80px;top:928px;line-height:21px;font-size:18.90px;color:#fff;transform:scaleX(0.8942);">Cancel</span>
<span class="t" style="left:13.70px;top:1578px;line-height:21px;font-size:18.70px;color:#c6c6c6;transform:scaleX(0.9205);font-weight:700;">Design code:</span>
<span class="t" style="left:129.80px;top:1578px;line-height:21px;font-size:18.70px;color:#fff;transform:scaleX(0.8656);font-weight:700;">EN</span>
<span class="t" style="left:2364.30px;top:1578px;line-height:20px;font-size:17.50px;color:#c4c4c4;transform:scaleX(1.0242);">ProtaSteel</span>
</div>
</div>
</body>
</html>
